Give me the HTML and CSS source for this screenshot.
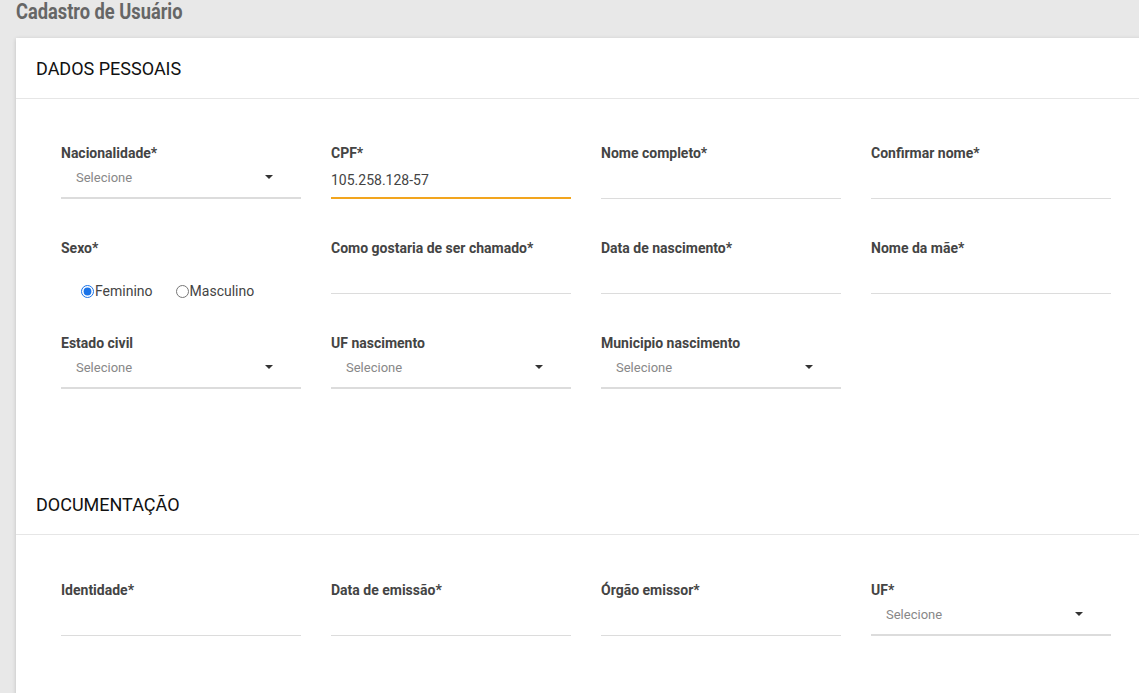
FILE: index.html
```html
<!DOCTYPE html>
<html lang="pt-BR">
<head>
<meta charset="utf-8">
<title>Cadastro de Usuário</title>
<link rel="stylesheet" href="styles.css">
</head>
<body>
<div class="page">
  <h1 class="page-title"><span class="page-title-text">Cadastro de Usuário</span></h1>
  <div class="card">
    <div class="card-header">DADOS PESSOAIS</div>
    <div class="card-body">
      <div class="grid">
        <div class="field">
          <label class="label">Nacionalidade*</label>
          <div class="select"><span class="placeholder">Selecione</span><span class="caret"></span></div>
        </div>
        <div class="field">
          <label class="label">CPF*</label>
          <div class="input focused"><span class="value">105.258.128-57</span></div>
        </div>
        <div class="field">
          <label class="label">Nome completo*</label>
          <div class="input"></div>
        </div>
        <div class="field">
          <label class="label">Confirmar nome*</label>
          <div class="input"></div>
        </div>

        <div class="field">
          <label class="label">Sexo*</label>
          <div class="radios">
            <label class="radio"><input type="radio" name="sexo" checked>Feminino</label>
            <label class="radio"><input type="radio" name="sexo">Masculino</label>
          </div>
        </div>
        <div class="field">
          <label class="label">Como gostaria de ser chamado*</label>
          <div class="input"></div>
        </div>
        <div class="field">
          <label class="label">Data de nascimento*</label>
          <div class="input"></div>
        </div>
        <div class="field">
          <label class="label">Nome da mãe*</label>
          <div class="input"></div>
        </div>

        <div class="field">
          <label class="label">Estado civil</label>
          <div class="select"><span class="placeholder">Selecione</span><span class="caret"></span></div>
        </div>
        <div class="field">
          <label class="label">UF nascimento</label>
          <div class="select"><span class="placeholder">Selecione</span><span class="caret"></span></div>
        </div>
        <div class="field">
          <label class="label">Municipio nascimento</label>
          <div class="select"><span class="placeholder">Selecione</span><span class="caret"></span></div>
        </div>
      </div>
    </div>

    <div class="card-header">DOCUMENTAÇÃO</div>
    <div class="card-body">
      <div class="grid">
        <div class="field">
          <label class="label">Identidade*</label>
          <div class="input"></div>
        </div>
        <div class="field">
          <label class="label">Data de emissão*</label>
          <div class="input"></div>
        </div>
        <div class="field">
          <label class="label">Órgão emissor*</label>
          <div class="input"></div>
        </div>
        <div class="field">
          <label class="label">UF*</label>
          <div class="select"><span class="placeholder">Selecione</span><span class="caret"></span></div>
        </div>
      </div>
    </div>
  </div>
</div>
</body>
</html>
```
FILE: styles.css
```css
html, body {
  margin: 0;
  padding: 0;
  height: 100%;
  overflow: hidden;
}
body {
  background: #e8e8e8;
  font-family: Roboto, "Liberation Sans", sans-serif;
  color: #444;
}
.page {
  padding: 0 0 0 16px;
}
.page-title {
  margin: 0;
  height: 38px;
  font-family: Roboto, "Liberation Sans", sans-serif;
  font-weight: bold;
  font-size: 22px;
  line-height: 24px;
  color: #666;
}
.page-title-text {
  display: inline-block;
  transform: scaleX(0.83);
  transform-origin: left center;
}
.card {
  background: #fff;
  margin-right: -20px;
  box-shadow: 0 1px 4px rgba(0, 0, 0, 0.18);
  min-height: calc(100vh - 38px);
}
.card-header {
  height: 60px;
  display: flex;
  align-items: center;
  padding: 0 20px;
  font-size: 18px;
  color: #111;
  border-bottom: 1px solid #e6e6e6;
}
.card-body {
  padding: 46px 0 85px 45px;
}
.card-body + .card-header + .card-body {
  padding-top: 47px;
}
.grid {
  display: grid;
  grid-template-columns: repeat(4, 240px);
  column-gap: 30px;
  row-gap: 41px;
}
.label {
  display: block;
  font-size: 14px;
  font-weight: bold;
  line-height: 17px;
  color: #444;
}
.input, .select {
  height: 37px;
  box-sizing: border-box;
  border-bottom: 1px solid #dcdcdc;
  display: flex;
  align-items: center;
}
.select {
  border-bottom: 2px solid #dcdcdc;
  padding: 0 28px 5px 15px;
  justify-content: space-between;
}
.placeholder {
  font-size: 13px;
  color: #888;
}
.caret {
  width: 0;
  height: 0;
  border-left: 4px solid transparent;
  border-right: 4px solid transparent;
  border-top: 4px solid #333;
}
.input.focused {
  border-bottom: 2px solid #f2a51e;
}
.value {
  font-size: 14px;
  color: #444;
}
.radios {
  display: flex;
  align-items: flex-start;
  gap: 23px;
  height: 37px;
  box-sizing: border-box;
  padding: 26px 0 0 20px;
}
.radio {
  display: flex;
  align-items: center;
  font-size: 14px;
  line-height: 17px;
  color: #444;
}
.radio input {
  margin: 0 1px 0 0;
  width: 13px;
  height: 13px;
  accent-color: #1a73e8;
}
```
